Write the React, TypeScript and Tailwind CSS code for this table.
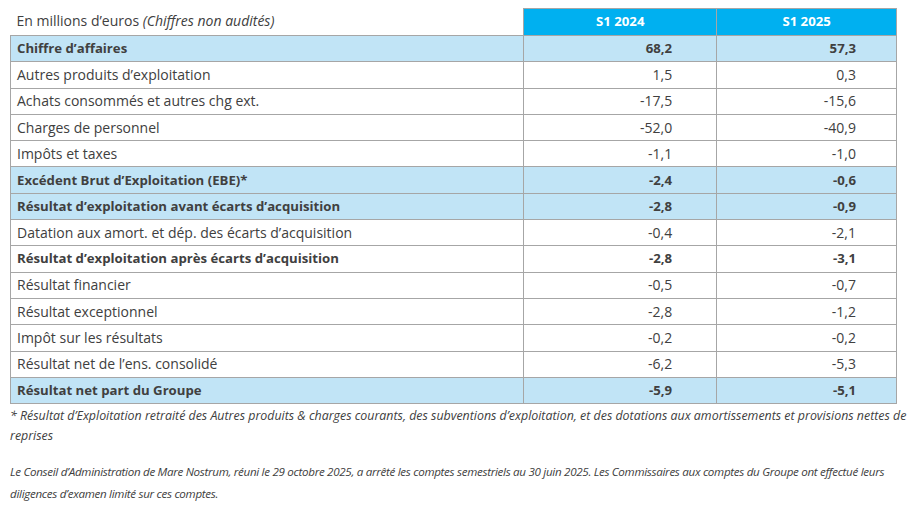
const rows: { label: string; a: string; b: string; hl?: boolean; bold?: boolean }[] = [
  { label: "Chiffre d’affaires", a: "68,2", b: "57,3", hl: true, bold: true },
  { label: "Autres produits d’exploitation", a: "1,5", b: "0,3" },
  { label: "Achats consommés et autres chg ext.", a: "-17,5", b: "-15,6" },
  { label: "Charges de personnel", a: "-52,0", b: "-40,9" },
  { label: "Impôts et taxes", a: "-1,1", b: "-1,0" },
  { label: "Excédent Brut d’Exploitation (EBE)*", a: "-2,4", b: "-0,6", hl: true, bold: true },
  { label: "Résultat d’exploitation avant écarts d’acquisition", a: "-2,8", b: "-0,9", hl: true, bold: true },
  { label: "Datation aux amort. et dép. des écarts d’acquisition", a: "-0,4", b: "-2,1" },
  { label: "Résultat d’exploitation après écarts d’acquisition", a: "-2,8", b: "-3,1", bold: true },
  { label: "Résultat financier", a: "-0,5", b: "-0,7" },
  { label: "Résultat exceptionnel", a: "-2,8", b: "-1,2" },
  { label: "Impôt sur les résultats", a: "-0,2", b: "-0,2" },
  { label: "Résultat net de l’ens. consolidé", a: "-6,2", b: "-5,3" },
  { label: "Résultat net part du Groupe", a: "-5,9", b: "-5,1", hl: true, bold: true },
];

export default function App() {
  return (
    <div className="w-[918px] h-[518px] bg-white pt-[8px] px-[10px] text-[#404040] font-['Open_Sans',sans-serif]">
      <table className="w-[887px] border-collapse text-[14px] leading-none">
        <colgroup>
          <col className="w-[514px]" />
          <col className="w-[193px]" />
          <col className="w-[180px]" />
        </colgroup>
        <thead>
          <tr className="h-[27px]">
            <th className="text-left font-normal pl-[6px] pb-[1px]">
              En millions d’euros <span className="italic">(Chiffres non audités)</span>
            </th>
            <th className="bg-[#00b0f0] text-white font-bold text-[13.2px] text-center border border-[#a6a6a6]">S1 2024</th>
            <th className="bg-[#00b0f0] text-white font-bold text-[13.2px] text-center border border-[#a6a6a6]">S1 2025</th>
          </tr>
        </thead>
        <tbody>
          {rows.map((r) => (
            <tr
              key={r.label}
              className={`h-[26.3px] ${r.hl ? "bg-[#c1e4f6]" : "bg-white"} ${r.bold ? "font-bold text-[13.2px]" : ""}`}
            >
              <td className="border border-[#a6a6a6] pl-[6px]">{r.label}</td>
              <td className="border border-[#a6a6a6] text-right pr-[44px]">{r.a}</td>
              <td className="border border-[#a6a6a6] text-right pr-[40px]">{r.b}</td>
            </tr>
          ))}
        </tbody>
      </table>
      <p className="italic text-[12.4px] leading-[20px] mt-[2px]">
        * Résultat d’Exploitation retraité des Autres produits &amp; charges courants, des subventions d’exploitation, et des dotations aux amortissements et provisions nettes de reprises
      </p>
      <p className="italic text-[11.6px] leading-[22px] mt-[15px] tracking-[-0.3px]">
        Le Conseil d’Administration de Mare Nostrum, réuni le 29 octobre 2025, a arrêté les comptes semestriels au 30 juin 2025. Les Commissaires aux comptes du Groupe ont effectué leurs diligences d’examen limité sur ces comptes.
      </p>
    </div>
  );
}
